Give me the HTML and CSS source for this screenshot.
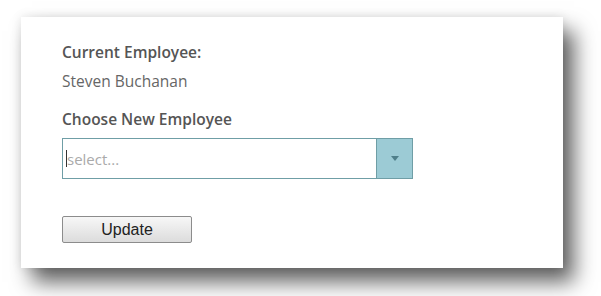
FILE: index.html
```html
<!DOCTYPE html>
<html lang="en">
<head>
  <meta charset="UTF-8">
  <title>Change Employee</title>
  <link rel="stylesheet" href="styles.css">
</head>
<body>
  <div class="card">
    <div class="label">Current Employee:</div>
    <div class="value">Steven Buchanan</div>
    <div class="label choose">Choose New Employee</div>
    <div class="combo">
      <span class="caret"></span>
      <span class="placeholder">select...</span>
      <span class="arrow">
        <svg width="8" height="5" viewBox="0 0 8 5"><path d="M0 0 L8 0 L4 5 Z" fill="#4f7f8a"/></svg>
      </span>
    </div>
    <button class="update">Update</button>
  </div>
</body>
</html>
```

FILE: styles.css
```css
body {
  margin: 0;
  min-height: 296px;
  background: #fff;
  font-family: 'Open Sans', sans-serif;
}

.card {
  margin: 17px 0 0 21px;
  width: 501px;
  height: 251px;
  padding: 0 0 0 41px;
  box-sizing: content-box;
  background: #fff;
  box-shadow: 11px 14px 20px rgba(0, 0, 0, 0.62), 0 0 10px rgba(0, 0, 0, 0.1);
  overflow: hidden;
}

.label {
  margin-top: 25px;
  font-size: 15.5px;
  font-weight: 600;
  line-height: 20px;
  color: #555;
}

.value {
  margin-top: 9px;
  font-size: 15.5px;
  line-height: 20px;
  color: #666;
}

.label.choose {
  margin-top: 18px;
}

.combo {
  display: flex;
  align-items: center;
  margin-top: 9px;
  width: 349px;
  height: 39px;
  border: 1px solid #6f9ea6;
}

.caret {
  width: 1px;
  height: 17px;
  margin-left: 3px;
  background: #333;
}

.placeholder {
  flex: 1;
  font-size: 15px;
  color: #aaa;
}

.arrow {
  display: flex;
  align-items: center;
  justify-content: center;
  width: 35px;
  height: 100%;
  border-left: 1px solid #6f9ea6;
  background: #9ccbd5;
}

.update {
  display: block;
  margin-top: 37px;
  width: 130px;
  height: 27px;
  padding: 0;
  font-family: 'Liberation Sans', Arial, sans-serif;
  font-size: 16px;
  color: #222;
  background: linear-gradient(#f7f7f7, #dcdcdc);
  border: 1px solid #8c8c8c;
  border-radius: 2px;
}
```
